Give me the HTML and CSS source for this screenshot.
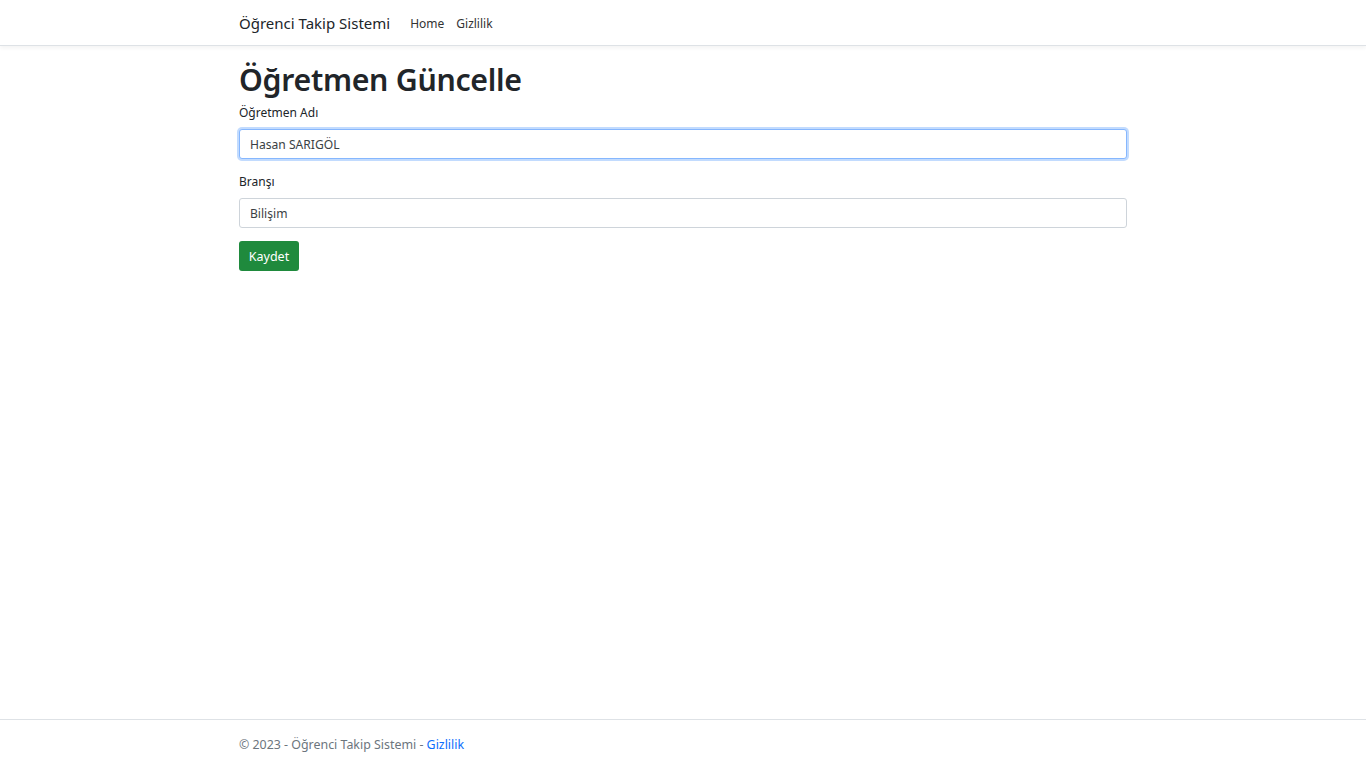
FILE: index.html
```html
<!DOCTYPE html>
<html lang="tr">
<head>
<meta charset="utf-8">
<title>Öğretmen Güncelle</title>
<link rel="stylesheet" href="styles.css">
</head>
<body>
<header class="topbar">
  <nav class="container nav">
    <a class="brand" href="#">Öğrenci Takip Sistemi</a>
    <ul class="nav-links">
      <li><a href="#">Home</a></li>
      <li><a href="#">Gizlilik</a></li>
    </ul>
  </nav>
</header>
<main class="container content">
  <h1 class="title">Öğretmen Güncelle</h1>
  <form class="form">
    <div class="field">
      <label class="label" for="ad">Öğretmen Adı</label>
      <input class="input focused" id="ad" type="text" value="Hasan SARIGÖL">
    </div>
    <div class="field">
      <label class="label" for="brans">Branşı</label>
      <input class="input" id="brans" type="text" value="Bilişim">
    </div>
    <button class="btn-success" type="button">Kaydet</button>
  </form>
</main>
<footer class="footer">
  <div class="container footer-inner">
    © 2023 - Öğrenci Takip Sistemi - <a href="#">Gizlilik</a>
  </div>
</footer>
</body>
</html>
```

FILE: styles.css
```css
* { box-sizing: border-box; }
html, body { margin: 0; padding: 0; height: 100%; }
body {
  font-family: "Noto Sans", "Open Sans", "Liberation Sans", sans-serif;
  font-size: 12px;
  color: #212529;
  background: #fff;
  display: flex;
  flex-direction: column;
  min-height: 768px;
}
a { text-decoration: none; }
.container {
  width: 888px;
  margin: 0 auto;
}
.topbar {
  height: 46px;
  border-bottom: 1px solid #dee2e6;
  box-shadow: 0 2px 4px rgba(0,0,0,.05);
  background: #fff;
}
.nav {
  display: flex;
  align-items: center;
  height: 45px;
}
.brand {
  font-size: 15px;
  color: #212529;
  margin-right: 20px;
}
.nav-links {
  display: flex;
  list-style: none;
  margin: 0;
  padding: 0;
  gap: 12px;
  padding-top: 2px;
}
.nav-links a {
  color: #333;
  font-size: 12px;
}
.content {
  flex: 1;
  padding-top: 14px;
}
.title {
  font-size: 30.3px;
  font-weight: 600;
  margin: 0 0 3px 0;
  line-height: 40px;
  letter-spacing: -0.3px;
}
.field {
  margin-bottom: 13px;
}
.label {
  display: block;
  margin-bottom: 6px;
  font-size: 12px;
  line-height: 20px;
}
.input {
  display: block;
  width: 100%;
  height: 30px;
  padding: 4px 10px;
  font-family: inherit;
  font-size: 12.1px;
  color: #3a3f44;
  border: 1px solid #ced4da;
  border-radius: 3px;
  background: #fff;
  outline: none;
}
.focused {
  border-color: #86b7fe;
  box-shadow: 0 0 0 2px rgba(13,110,253,.25);
}
.btn-success {
  width: 60px;
  height: 30px;
  padding: 0;
  border: none;
  border-radius: 3px;
  background: #1f8a3d;
  color: #fff;
  font-family: inherit;
  font-size: 12.5px;
}
.footer {
  border-top: 1px solid #dee2e6;
  height: 49px;
}
.footer-inner {
  line-height: 50px;
  color: #6c757d;
  font-size: 12.4px;
}
.footer-inner a { color: #0d6efd; }
```
